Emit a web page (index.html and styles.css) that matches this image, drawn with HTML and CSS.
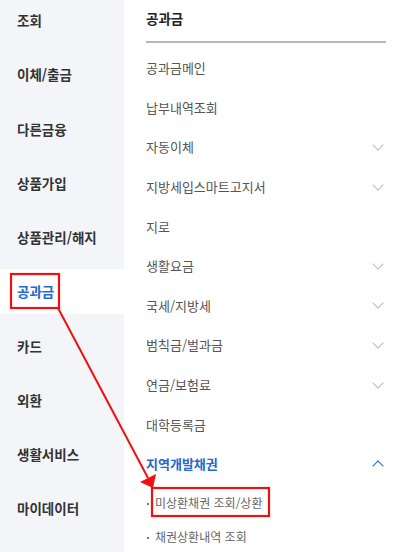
FILE: index.html
```html
<!DOCTYPE html>
<html lang="ko">
<head>
<meta charset="UTF-8" />
<meta name="viewport" content="width=device-width, initial-scale=1.0">
<title>공과금 메뉴</title>
<link rel="stylesheet" href="styles.css">
</head>
<body>
<div class="page">
  <aside class="side">
    <a class="side-item">조회</a>
    <a class="side-item">이체/출금</a>
    <a class="side-item">다른금융</a>
    <a class="side-item">상품가입</a>
    <a class="side-item">상품관리/해지</a>
    <a class="side-item active">공과금</a>
    <a class="side-item">카드</a>
    <a class="side-item">외환</a>
    <a class="side-item">생활서비스</a>
    <a class="side-item">마이데이터</a>
  </aside>

  <main class="panel">
    <div class="panel-title">공과금</div>
    <ul class="menu">
      <li class="menu-item">공과금메인</li>
      <li class="menu-item">납부내역조회</li>
      <li class="menu-item has-sub">자동이체<span class="chev"></span></li>
      <li class="menu-item has-sub">지방세입스마트고지서<span class="chev"></span></li>
      <li class="menu-item">지로</li>
      <li class="menu-item has-sub">생활요금<span class="chev"></span></li>
      <li class="menu-item has-sub">국세/지방세<span class="chev"></span></li>
      <li class="menu-item has-sub">범칙금/벌과금<span class="chev"></span></li>
      <li class="menu-item has-sub">연금/보험료<span class="chev"></span></li>
      <li class="menu-item">대학등록금</li>
      <li class="menu-item has-sub open">지역개발채권<span class="chev up"></span></li>
      <li class="sub-list">
        <div class="sub-item first">미상환채권 조회/상환</div>
        <div class="sub-item">채권상환내역 조회</div>
      </li>
    </ul>
  </main>
</div>

<!-- annotation overlay -->
<svg class="marks" width="400" height="552" viewBox="0 0 400 552">
  <rect x="11" y="274" width="48" height="34" fill="none" stroke="#f01010" stroke-width="2.2"/>
  <rect x="152" y="488" width="117" height="28" fill="none" stroke="#f01010" stroke-width="2.2"/>
  <line x1="58" y1="308" x2="148" y2="478" stroke="#f01010" stroke-width="2"/>
  <polygon points="153,488 140,482 156,474" fill="#f01010"/>
</svg>
</body>
</html>
```

FILE: styles.css
```css
html, body {
  margin: 0;
  height: 552px;
  overflow: hidden;
  background: #fff;
}
body {
  font-family: "Noto Sans CJK KR", "Noto Sans", sans-serif;
  color: #333;
  position: relative;
}
.page {
  display: flex;
  height: 552px;
}
.side {
  width: 124px;
  flex-shrink: 0;
  background-color: #f3f5f8;
  display: flex;
  flex-direction: column;
  gap: 9.25px;
}
.side-item {
  display: block;
  height: 45px;
  line-height: 45px;
  padding-left: 17px;
  font-size: 13.5px;
  font-weight: bold;
  color: #333;
}
.side-item:first-child {
  margin-top: -2px;
}
.side-item.active {
  background-color: #fff;
  color: #2468d2;
}
.panel {
  flex: 1;
  padding: 0 14px 0 22px;
}
.panel-title {
  height: 41px;
  line-height: 37px;
  font-size: 13.5px;
  font-weight: bold;
  color: #222;
  border-bottom: 2px solid #b4b7bc;
}
.menu {
  list-style: none;
  margin: 5px 0 0;
  padding: 0;
}
.menu-item {
  height: 39.6px;
  display: flex;
  align-items: center;
  justify-content: space-between;
  font-size: 13px;
  color: #555;
}
.menu-item.open {
  color: #2468d2;
  font-weight: bold;
}
.chev {
  width: 7px;
  height: 7px;
  border-right: 1px solid #bdbdbd;
  border-bottom: 1px solid #bdbdbd;
  transform: rotate(45deg);
  margin: -4px 4px 0 0;
}
.chev.up {
  border-color: #2468d2;
  border-width: 1.6px;
  transform: rotate(-135deg);
  margin-top: 4px;
}
.sub-list {
  padding-top: 2px;
}
.sub-item {
  height: 34px;
  line-height: 34px;
  font-size: 12px;
  color: #666;
  padding-left: 9px;
  position: relative;
}
.sub-item::before {
  content: "";
  position: absolute;
  left: 1px;
  top: 17px;
  width: 2px;
  height: 2px;
  background: #777;
}
.marks {
  position: absolute;
  left: 0;
  top: 0;
  pointer-events: none;
}
```
